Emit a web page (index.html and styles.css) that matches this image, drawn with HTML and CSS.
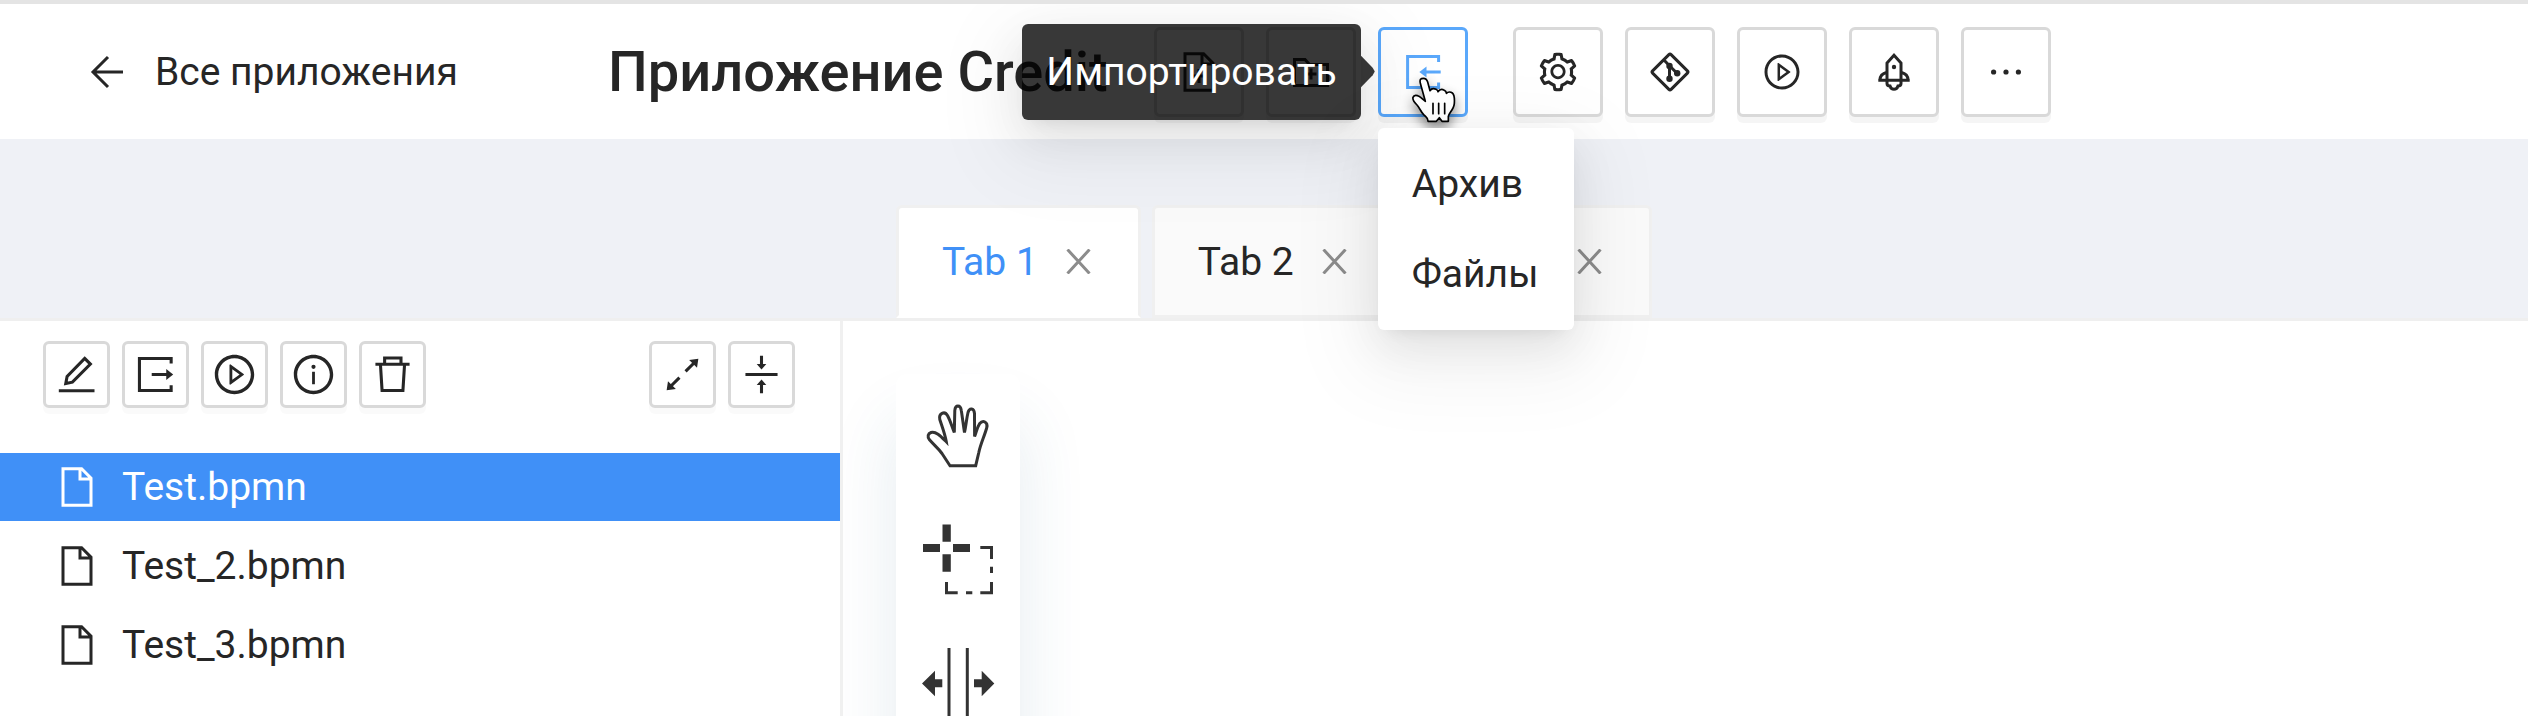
FILE: index.html
```
<!DOCTYPE html>
<html lang="ru">
<head>
	<meta charset="utf-8">
	<title>Приложение Credit</title>
	<link rel="stylesheet" href="styles.css">
</head>
<body>
<svg class="sprite" aria-hidden="true">
  <symbol id="i-file" viewBox="0 0 44 44">
    <path class="ln" d="M8 3.8H26.6L36 13.2V40.2H8ZM25 4V14H36"/>
  </symbol>
  <symbol id="i-play" viewBox="0 0 1024 1024">
    <path d="M512 64C264.6 64 64 264.6 64 512s200.6 448 448 448 448-200.6 448-448S759.4 64 512 64zm0 820c-205.4 0-372-166.6-372-372s166.6-372 372-372 372 166.6 372 372-166.6 372-372 372z"/>
    <path d="M719.4 499.1l-296.1-215A15.9 15.9 0 00398 297v430c0 13.1 14.8 20.5 25.3 12.9l296.1-215a15.9 15.9 0 000-25.8zm-257.6 134V390.9L628.5 512 461.8 633.1z"/>
  </symbol>
  <symbol id="i-close" viewBox="0 0 25 25">
    <path class="ln" d="M1.5 0.5L23.5 24.5M23.5 0.5L1.5 24.5"/>
  </symbol>
</svg>

<header class="header">
  <a class="back" href="#">
    <svg class="back-arrow" viewBox="0 0 34 34"><path class="ln" d="M33 17H3M18 2L3 17L18 32"/></svg>
    <span>Все приложения</span>
  </a>
  <h1>Приложение Credit</h1>
  <div class="toolbar">
    <div class="group">
      <button class="btn" aria-label="Создать файл">
        <svg viewBox="0 0 44 44"><path class="ln" d="M8 3.8H26.6L36 13.2V40.2H8ZM25 4V14H36M22 19V33M15 26H29"/></svg>
      </button>
      <button class="btn" aria-label="Создать папку">
        <svg viewBox="0 0 44 44"><path class="ln" d="M5.5 9.5H16L20.5 14.5H38.5V35.5H5.5ZM22 18.5V29.5M16.5 24H27.5"/></svg>
      </button>
      <div class="drop">
        <button class="btn hover" aria-label="Импортировать" aria-haspopup="menu">
          <svg viewBox="0 0 44 44">
            <path class="ln" d="M37.6 12V6.6H6.6V37.6H37.6V32.5M24 22H39.7"/>
            <path d="M18.3 22L25.5 16.5V27.5Z"/>
          </svg>
        </button>
        <div class="tooltip" role="tooltip">Импортировать</div>
        <svg class="cursor" viewBox="150 160 150 156" aria-hidden="true">
          <path d="M199 242L184 188C181 176 186 173 193 173C200 173 204 177 206 184L213 210C217 204 225 203 231 206C235 208 237 210 237 213C242 206 250 205 256 209C260 211 262 214 262 218C267 213 275 213 280 217C286 222 287 234 286 248C285 266 270 276 268 287L268 302H249L241 291L232 302H207C208 292 203 291 194 282C184 271 182 262 174 253C165 244 160 237 162 230C165 222 174 223 180 227C187 231 193 238 199 242Z"/>
          <path d="M222 248V279M239 248V279M257 248V279"/>
        </svg>
        <div class="menu" role="menu">
          <a href="#" role="menuitem">Архив</a>
          <a href="#" role="menuitem">Файлы</a>
        </div>
      </div>
    </div>
    <div class="group">
      <button class="btn" aria-label="Настройки">
        <svg viewBox="0 0 1024 1024"><path d="M924.8 625.7l-65.5-56c3.1-19 4.7-38.4 4.7-57.8s-1.6-38.8-4.7-57.8l65.5-56a32.03 32.03 0 009.3-35.2l-.9-2.6a443.74 443.74 0 00-79.7-137.9l-1.8-2.1a32.12 32.12 0 00-35.1-9.5l-81.3 28.9c-30-24.6-63.5-44-99.7-57.6l-15.7-85a32.05 32.05 0 00-25.8-25.7l-2.7-.5c-52.1-9.4-106.9-9.4-159 0l-2.7.5a32.05 32.05 0 00-25.8 25.7l-15.8 85.4a351.86 351.86 0 00-99 57.4l-81.9-29.1a32 32 0 00-35.1 9.5l-1.8 2.1a446.02 446.02 0 00-79.7 137.9l-.9 2.6c-4.5 12.5-.8 26.5 9.3 35.2l66.3 56.6c-3.1 18.8-4.6 38-4.6 57.1 0 19.2 1.5 38.4 4.6 57.1L99 625.5a32.03 32.03 0 00-9.3 35.2l.9 2.6c18.1 50.4 44.9 96.9 79.7 137.9l1.8 2.1a32.12 32.12 0 0035.1 9.5l81.9-29.1c29.8 24.5 63.1 43.9 99 57.4l15.8 85.4a32.05 32.05 0 0025.8 25.7l2.7.5a449.4 449.4 0 00159 0l2.7-.5a32.05 32.05 0 0025.8-25.7l15.7-85a350 350 0 0099.7-57.6l81.3 28.9a32 32 0 0035.1-9.5l1.8-2.1c34.8-41.1 61.6-87.5 79.7-137.9l.9-2.6c4.5-12.3.8-26.3-9.3-35zM788.3 465.9c2.5 15.1 3.8 30.6 3.8 46.1s-1.3 31-3.8 46.1l-6.6 40.1 74.7 63.9a370.03 370.03 0 01-42.6 73.6L721 702.8l-31.4 25.8c-23.9 19.6-50.5 35-79.3 45.8l-38.1 14.3-17.9 97a377.5 377.5 0 01-85 0l-17.9-97.2-37.8-14.5c-28.5-10.8-55-26.2-78.7-45.7l-31.4-25.9-93.4 33.2c-17-22.9-31.2-47.6-42.6-73.6l75.5-64.5-6.5-40c-2.4-14.9-3.7-30.3-3.7-45.5 0-15.3 1.2-30.6 3.7-45.5l6.5-40-75.5-64.5c11.3-26.1 25.6-50.7 42.6-73.6l93.4 33.2 31.4-25.9c23.7-19.5 50.2-34.9 78.7-45.7l37.9-14.3 17.9-97.2c28.1-3.2 56.8-3.2 85 0l17.9 97 38.1 14.3c28.7 10.8 55.4 26.2 79.3 45.8l31.4 25.8 92.8-32.9c17 22.9 31.2 47.6 42.6 73.6L781.8 426l6.5 39.9zM512 326c-97.2 0-176 78.8-176 176s78.8 176 176 176 176-78.8 176-176-78.8-176-176-176zm79.2 255.2A111.6 111.6 0 01512 614c-29.9 0-58-11.7-79.2-32.8A111.6 111.6 0 01400 502c0-29.9 11.7-58 32.8-79.2C454 401.6 482.1 390 512 390c29.9 0 58 11.6 79.2 32.8A111.6 111.6 0 01624 502c0 29.9-11.7 58-32.8 79.2z"/></svg>
      </button>
      <button class="btn" aria-label="Git">
        <svg viewBox="0 0 44 44">
          <path class="ln" d="M20.9 4.6Q22 3.5 23.1 4.6L39.4 20.9Q40.5 22 39.4 23.1L23.1 39.4Q22 40.5 20.9 39.4L4.6 23.1Q3.5 22 4.6 20.9ZM15.5 9.5L21.5 15.7L29 23.3M21.5 15.7V28.7"/>
          <circle cx="21.5" cy="16" r="3.2"/><circle cx="29.2" cy="23.3" r="3.2"/><circle cx="21.5" cy="28.8" r="3.2"/>
        </svg>
      </button>
      <button class="btn" aria-label="Запустить">
        <svg class="sm"><use href="#i-play"/></svg>
      </button>
      <button class="btn" aria-label="Развернуть">
        <svg viewBox="0 0 44 44">
          <path class="ln" d="M15 30.3V13L22 5.3L29 13V30.3M6.3 30.3H37.7M15 22.3C10.5 23.5 8 26.5 8 30M29 22.3C33.5 23.5 36 26.5 36 30M15 31V33.5Q15 36 18 36Q19 39.3 22 39.3Q25 39.3 26 36Q29 36 29 33.5V31"/>
          <circle cx="22" cy="17" r="2.2"/>
        </svg>
      </button>
      <button class="btn" aria-label="Ещё">
        <svg viewBox="0 0 44 44"><circle cx="9.6" cy="22" r="2.6"/><circle cx="22" cy="22" r="2.6"/><circle cx="34.4" cy="22" r="2.6"/></svg>
      </button>
    </div>
  </div>
</header>

<nav class="tabs" role="tablist">
  <div class="tab active" role="tab" aria-selected="true"><span>Tab 1</span><button aria-label="Закрыть"><svg><use href="#i-close"/></svg></button></div>
  <div class="tab" role="tab"><span>Tab 2</span><button aria-label="Закрыть"><svg><use href="#i-close"/></svg></button></div>
  <div class="tab" role="tab"><span>Tab 3</span><button aria-label="Закрыть"><svg><use href="#i-close"/></svg></button></div>
</nav>

<div class="work">
  <aside class="side">
    <div class="side-bar">
      <div class="side-group">
        <button class="btn small" aria-label="Редактировать">
          <svg viewBox="0 0 44 44"><path class="ln" d="M30 6.2L35.6 11.8L18 29.5L11.5 30.8L12.8 24ZM4.7 37.8H39.6"/></svg>
        </button>
        <button class="btn small" aria-label="Экспортировать">
          <svg viewBox="0 0 44 44">
            <path class="ln" d="M37.3 11.2V6.3H6.3V37.7H37.3V32.5M18.3 22H34"/>
            <path d="M39.3 22L32.5 16.7V27.3Z"/>
          </svg>
        </button>
        <button class="btn small" aria-label="Запустить">
          <svg><use href="#i-play"/></svg>
        </button>
        <button class="btn small" aria-label="Информация">
          <svg viewBox="0 0 1024 1024">
            <path d="M512 64C264.6 64 64 264.6 64 512s200.6 448 448 448 448-200.6 448-448S759.4 64 512 64zm0 820c-205.4 0-372-166.6-372-372s166.6-372 372-372 372 166.6 372 372-166.6 372-372 372z"/>
            <path d="M464 336a48 48 0 1096 0 48 48 0 10-96 0zm72 112h-48c-4.4 0-8 3.6-8 8v272c0 4.4 3.6 8 8 8h48c4.4 0 8-3.6 8-8V456c0-4.4-3.6-8-8-8z"/>
          </svg>
        </button>
        <button class="btn small" aria-label="Удалить">
          <svg viewBox="0 0 44 44"><path class="ln" d="M5.3 12H38.7M14.3 12V5.8H30.3V12M10.2 12L11.8 37.6H32.2L33.8 12"/></svg>
        </button>
      </div>
      <div class="side-group">
        <button class="btn small" aria-label="Развернуть всё">
          <svg viewBox="0 0 44 44">
            <path class="ln" d="M25 19L33 11M19 25L11 33"/>
            <path d="M37.5 6.5L28.5 7.8L36.2 15.5ZM6.5 37.5L7.8 28.5L15.5 36.2Z"/>
          </svg>
        </button>
        <button class="btn small" aria-label="Свернуть всё">
          <svg viewBox="0 0 44 44">
            <path class="ln" d="M6.3 22H37.7M22 3.7V13M22 40.3V31"/>
            <path d="M22 17.2L17.3 11.7H26.7ZM22 26.8L17.3 32.3H26.7Z"/>
          </svg>
        </button>
      </div>
    </div>
    <ul class="files">
      <li><a class="active" href="#"><svg><use href="#i-file"/></svg>Test.bpmn</a></li>
      <li><a href="#"><svg><use href="#i-file"/></svg>Test_2.bpmn</a></li>
      <li><a href="#"><svg><use href="#i-file"/></svg>Test_3.bpmn</a></li>
    </ul>
  </aside>
  <main class="canvas">
    <div class="palette">
      <button aria-label="Рука">
        <svg viewBox="0 0 124 124"><path class="ln" d="M54 91.7L46 79.5C42 74 37.5 70.5 33.5 65.8C31 62.5 32 59.5 35 58.5C40 57 45 62.5 50.3 67.8C49 60 46 52.5 43.8 45.5C42.5 39.5 48.5 36.5 51.5 41.5C54.5 47 56 53 58.3 58.5L58.8 36.5C59.3 30.5 64.5 30.5 65.3 36.5C66.5 44 67.3 51 68.5 58.5C70 51.5 70.5 45 72 38.5C73.5 33.5 78 34 78.5 39.5L78.6 62.5C80.5 58 81 53.5 83.5 49.8C87 45.5 92 48 90.8 53.5C88.5 62 84.5 70 82.8 78.5L79.7 91.7Z"/></svg>
      </button>
      <button aria-label="Лассо">
        <svg viewBox="0 0 124 124">
          <path d="M46.5 26.5h8.3v17.2h-8.3zM46.5 56.3h8.3v17.4h-8.3zM27 46h17v8H27zM57 46h17v8H57z"/>
          <path class="ln" d="M84.3 49.5H95.5V61M95.5 68.7V75M95.5 84V94.8H84.3M76.3 94.8H70M61.7 94.8H50.5V84"/>
        </svg>
      </button>
      <button aria-label="Пространство">
        <svg viewBox="0 0 124 124">
          <path class="ln" d="M53 26V98M71.3 26V98"/>
          <path d="M26 61.5L39 48.7V57.2H46.3V65.3H39V74.2ZM98.3 61.5L85.7 48.7V57.2H78V65.3H85.7V74.2Z"/>
        </svg>
      </button>
    </div>
  </main>
</div>
</body>
</html>
```

FILE: styles.css
```
*{box-sizing:border-box;}
body,h1,ul{margin:0;padding:0;}
body{
  display: flex;
  flex-direction: column;
  height: 100vh;
  overflow: hidden;
  border-top: 4px solid #e4e4e4;
  background: #fff;
  color: #262626;
  font-family: Roboto, "Liberation Sans", sans-serif;
  font-size: 39px;
  line-height: 62px;
}
a{
  color: inherit;
  text-decoration: none;
}
button{
  padding: 0;
  border: 0;
  background: none;
  color: inherit;
  cursor: pointer;
}
svg{
  display: block;
  flex: none;
  fill: currentColor;
}
.ln{
  fill: none;
  stroke: currentColor;
  stroke-width: 3px;
}
.sprite{
  position: absolute;
  width: 0;
  height: 0;
}

/* header */
.header{
  display: flex;
  flex: none;
  align-items: center;
  height: 135px;
  padding-left: 90px;
}
.back{
  display: flex;
  align-items: center;
  gap: 31px;
}
.back-arrow{
  width: 34px;
  height: 34px;
}
h1{
  margin-left: 150px;
  font-size: 56px;
  font-weight: 500;
  white-space: nowrap;
}
.toolbar{
  display: flex;
  gap: 45px;
  margin-left: 46px;
}
.group{
  display: flex;
  gap: 22px;
}
.btn{
  display: flex;
  align-items: center;
  justify-content: center;
  width: 90px;
  height: 90px;
  border: 3px solid #d9d9d9;
  border-radius: 6px;
  background: #fff;
  box-shadow: 0 6px 0 rgba(0,0,0,0.04);
}
.btn svg{
  width: 44px;
  height: 44px;
}
.btn svg.sm{
  width: 40px;
  height: 40px;
}
.btn.hover{
  border-color: #5aa8fb;
  color: #5aa8fb;
}
.btn.small{
  width: 67px;
  height: 67px;
  box-shadow: 0 6px 0 rgba(0,0,0,0.02);
}
.btn.small svg{
  width: 45px;
  height: 45px;
}

/* import button: tooltip, menu, pointer */
.drop{
  position: relative;
  z-index: 2;
}
.tooltip{
  position: absolute;
  top: -3px;
  right: calc(100% + 17px);
  padding: 17px 24px;
  border-radius: 6px;
  background: rgba(0,0,0,0.78);
  box-shadow: 0 8px 17px -11px rgba(0,0,0,0.12), 0 17px 45px rgba(0,0,0,0.08), 0 25px 79px 22px rgba(0,0,0,0.05);
  color: #fff;
  white-space: nowrap;
}
.tooltip:after{
  content: "";
  position: absolute;
  top: 32px;
  left: 100%;
  width: 14px;
  height: 32px;
  background: rgba(0,0,0,0.78);
  clip-path: polygon(0 0, 85% 38%, 100% 50%, 85% 62%, 0 100%);
}
.cursor{
  position: absolute;
  top: 47px;
  left: 31px;
  width: 50px;
  height: 52px;
  fill: #fff;
  stroke: #000;
  stroke-width: 5px;
  stroke-linejoin: round;
  stroke-linecap: round;
  overflow: visible;
  filter: drop-shadow(0 6px 6px rgba(0,0,0,0.45));
}
.menu{
  position: absolute;
  top: calc(100% + 11px);
  left: 0;
  min-width: 196px;
  padding: 11px 0;
  border-radius: 6px;
  background: #fff;
  box-shadow: 0 8px 17px -11px rgba(0,0,0,0.12), 0 17px 45px rgba(0,0,0,0.08), 0 25px 79px 22px rgba(0,0,0,0.05);
}
.menu a{
  display: block;
  padding: 14px 34px;
}

/* tabs */
.tabs{
  display: flex;
  flex: none;
  gap: 11px;
  padding: 66px 0 0 896px;
  border-bottom: 3px solid #efefef;
  background: #eff1f6;
}
.tab{
  display: flex;
  align-items: center;
  gap: 28px;
  height: 113px;
  padding: 0 47px 0 43px;
  border: 3px solid #f0f0f0;
  border-radius: 6px 6px 0 0;
  background: #fafafa;
}
.tab.active{
  border-bottom-color: #fff;
  background: #fff;
  color: #4090f7;
}
.tab button{
  color: #8c8c8c;
}
.tab svg{
  width: 25px;
  height: 25px;
}

/* files */
.work{
  display: flex;
  flex: 1;
  min-height: 0;
}
.side{
  flex: none;
  width: 843px;
  border-right: 3px solid #f0f0f0;
}
.side-bar{
  display: flex;
  justify-content: space-between;
  padding: 20px 45px 45px 43px;
}
.side-group{
  display: flex;
  gap: 12px;
}
.files{
  display: flex;
  flex-direction: column;
  gap: 11px;
  list-style: none;
}
.files a{
  display: flex;
  align-items: center;
  gap: 23px;
  height: 68px;
  padding-left: 55px;
}
.files a.active{
  background: #4090f7;
  color: #fff;
}
.files svg{
  width: 44px;
  height: 44px;
}

/* modeler */
.canvas{
  flex: 1;
  padding: 53px;
  overflow: hidden;
}
.palette{
  display: flex;
  flex-direction: column;
  width: 124px;
  height: 900px;
  border-radius: 11px;
  background: #fff;
  box-shadow: 0 48px 68px rgba(40,100,130,0.12);
  color: #333;
}
.palette svg{
  width: 124px;
  height: 124px;
}
```
